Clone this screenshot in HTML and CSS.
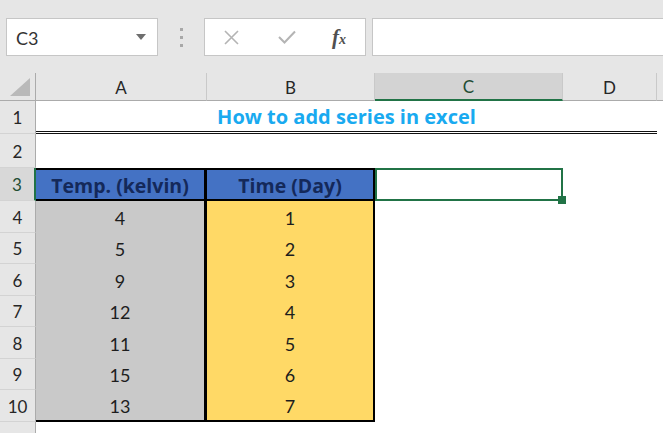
FILE: index.html
```
<!DOCTYPE html>
<html>
<head>
<meta charset="utf-8">
<link rel="stylesheet" href="styles.css">
</head>
<body>
<div class="toolbar">
  <div class="namebox">
    <span class="nb-text">C3</span>
    <svg class="nb-arrow" width="10" height="6" viewBox="0 0 10 6"><polygon points="0,0 10,0 5,6" fill="#6e6e6e"/></svg>
  </div>
  <div class="dots"><i></i><i></i><i></i></div>
  <div class="fbtns">
    <svg class="ic-x" width="15" height="15" viewBox="0 0 15 15"><path d="M1 1 L14 14 M14 1 L1 14" stroke="#b4b4b4" stroke-width="1.6" fill="none"/></svg>
    <svg class="ic-check" width="18" height="14" viewBox="0 0 18 14"><path d="M1 7 L6.5 12.5 L17 1.5" stroke="#b4b4b4" stroke-width="2" fill="none"/></svg>
    <span class="fx">f<span class="fx-x">x</span></span>
  </div>
  <div class="finput"></div>
</div>
<div class="sheet">
  <div class="corner"><svg width="20" height="18" viewBox="0 0 20 18"><polygon points="20,0 20,18 0,18" fill="#b9b9b9"/></svg></div>
  <div class="ch">A</div>
  <div class="ch">B</div>
  <div class="ch ch-sel">C</div>
  <div class="ch">D</div>
  <div class="ch ch-last"></div>

  <div class="rh">1</div>
  <div class="title">How to add series in excel</div>
  <div class="blank"></div>

  <div class="rh">2</div>
  <div class="blank span5"></div>

  <div class="rh rh-sel">3</div>
  <div class="cell hd a a3">Temp. (kelvin)</div>
  <div class="cell hd b b3">Time (Day)</div>
  <div class="selcell"><span class="handle"></span></div>
  <div class="blank span2"></div>

  <div class="rh">4</div><div class="cell a">4</div><div class="cell b">1</div><div class="blank span3"></div>
  <div class="rh">5</div><div class="cell a">5</div><div class="cell b">2</div><div class="blank span3"></div>
  <div class="rh">6</div><div class="cell a">9</div><div class="cell b">3</div><div class="blank span3"></div>
  <div class="rh">7</div><div class="cell a">12</div><div class="cell b">4</div><div class="blank span3"></div>
  <div class="rh">8</div><div class="cell a">11</div><div class="cell b">5</div><div class="blank span3"></div>
  <div class="rh">9</div><div class="cell a">15</div><div class="cell b">6</div><div class="blank span3"></div>
  <div class="rh">10</div><div class="cell a last">13</div><div class="cell b last">7</div><div class="blank span3"></div>

  <div class="rh rh-end"></div>
  <div class="blank span5"></div>
</div>
</body>
</html>
```
FILE: styles.css
```
* { box-sizing: border-box; }
html, body { margin: 0; padding: 0; }
body {
  width: 663px;
  height: 433px;
  overflow: hidden;
  background: #fff;
  font-family: "Lato", "Open Sans", sans-serif;
}
.toolbar {
  height: 73px;
  background: #e6e6e6;
  display: flex;
  align-items: flex-start;
  padding-top: 18px;
  padding-left: 6px;
}
.namebox {
  width: 152px;
  height: 38px;
  background: #fff;
  border: 1px solid #c6c6c6;
  display: flex;
  align-items: center;
  justify-content: space-between;
  padding: 0 11px 0 9px;
}
.nb-text {
  font-family: "Lato", sans-serif;
  font-size: 18px;
  color: #333;
  padding-top: 1px;
}
.dots {
  width: 46px;
  height: 38px;
  display: flex;
  flex-direction: column;
  align-items: center;
  justify-content: center;
  gap: 5px;
}
.dots i {
  display: block;
  width: 3px;
  height: 3px;
  background: #a8a8a8;
}
.fbtns {
  width: 162px;
  height: 38px;
  background: #fff;
  border: 1px solid #c6c6c6;
  display: flex;
  align-items: center;
  padding-left: 19px;
}
.ic-x { margin-right: 39px; }
.ic-check { margin-right: 36px; }
.fx {
  font-family: "Liberation Serif", serif;
  font-style: italic;
  font-weight: bold;
  font-size: 21px;
  color: #505050;
  line-height: 1;
}
.fx-x { font-size: 14px; }
.finput {
  flex: 1;
  margin-left: 6px;
  height: 38px;
  background: #fff;
  border: 1px solid #c6c6c6;
  border-right: none;
}
.sheet {
  display: grid;
  grid-template-columns: 36px 171px 168px 188px 94px 1fr;
  grid-template-rows: 28px 33px 34px 33px 32px 31px 32px 31px 32px 31px 32px 1fr;
  height: 360px;
  font-size: 18px;
  color: #1d1d1d;
}
.corner {
  background: #e6e6e6;
  border-right: 1px solid #ababab;
  border-bottom: 1px solid #ababab;
  display: flex;
  align-items: flex-end;
  justify-content: flex-end;
  padding: 0 5px 4px 0;
}
.ch {
  background: #e6e6e6;
  border-right: 1px solid #c9c9c9;
  border-bottom: 1px solid #ababab;
  display: flex;
  align-items: center;
  justify-content: center;
  font-size: 17px;
  color: #262626;
  padding-top: 1px;
}
.ch-sel {
  background: #d3d3d3;
  border-bottom: 2px solid #217346;
  color: #1f4d33;
}
.ch-last { border-right: none; }
.rh {
  background: #e6e6e6;
  border-right: 1px solid #ababab;
  border-bottom: 1px solid #d3d3d3;
  display: flex;
  align-items: center;
  justify-content: center;
  font-size: 17px;
  color: #262626;
  padding-top: 1px;
}
.rh-sel {
  background: #d8d8d8;
  border-right: 2px solid #217346;
  color: #1f4d33;
}
.rh-end { border-bottom: none; }
.title {
  grid-column: span 4;
  border-bottom: 3px double #111;
  display: flex;
  align-items: center;
  justify-content: center;
  font-family: "Open Sans", sans-serif;
  font-weight: bold;
  color: #19aaf0;
  font-size: 20px;
  padding-top: 1px;
}
.blank { background: #fff; }
.span2 { grid-column: span 2; }
.span3 { grid-column: span 3; }
.span5 { grid-column: span 5; }
.cell {
  display: flex;
  align-items: center;
  justify-content: center;
  padding-top: 1px;
}
.a {
  background: #c9c9c9;
  border-right: 3px solid #000;
}
.b {
  background: #ffd966;
  border-right: 2px solid #000;
}
.hd {
  background: #4472c4;
  color: #14295a;
  font-family: "Open Sans", sans-serif;
  font-weight: bold;
  font-size: 19.5px;
  border-top: 2px solid #000;
  border-bottom: 2px solid #000;
}
.last { border-bottom: 2px solid #000; }
.selcell {
  position: relative;
  border: 2px solid #217346;
}
.handle {
  position: absolute;
  z-index: 2;
  right: -5px;
  bottom: -5px;
  width: 8px;
  height: 8px;
  background: #217346;
}
```
